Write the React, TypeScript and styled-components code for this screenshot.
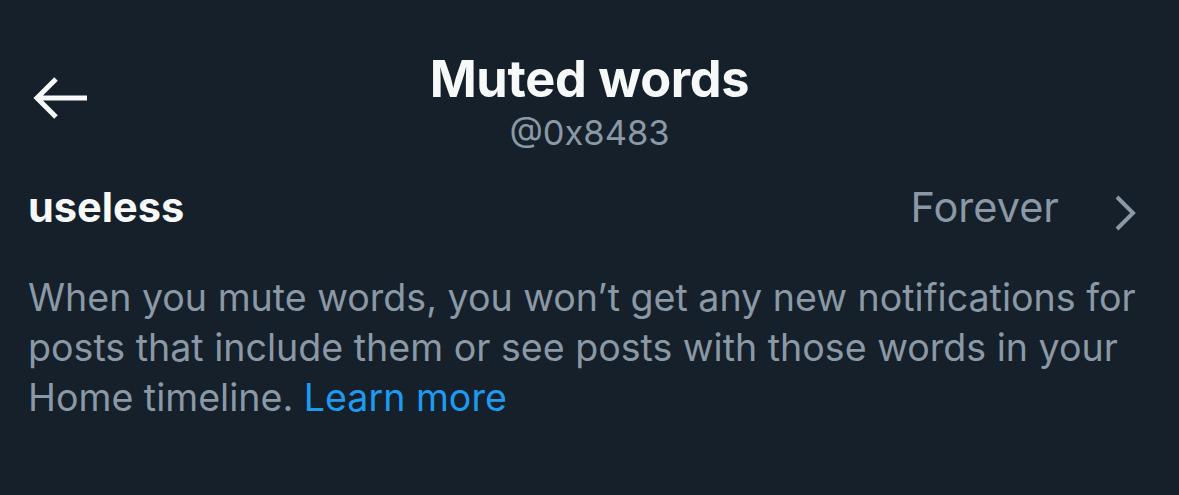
import styled, { createGlobalStyle } from 'styled-components'

const GlobalStyle = createGlobalStyle`
  html, body {
    margin: 0;
    padding: 0;
    background: #15202b;
  }
  body {
    font-family: Inter, "Noto Sans", sans-serif;
    -webkit-font-smoothing: antialiased;
  }
`

const Screen = styled.div`
  width: 1179px;
  height: 495px;
  background: #15202b;
  color: #f7f9f9;
  overflow: hidden;
`

const Header = styled.header`
  display: grid;
  grid-template-columns: 1fr auto 1fr;
  align-items: start;
  height: 165px;
  padding: 0 28px;
  box-sizing: border-box;
`

const BackButton = styled.button`
  display: flex;
  align-items: center;
  justify-content: center;
  justify-self: start;
  width: 62px;
  height: 62px;
  padding: 0;
  margin: 67px 0 0 2px;
  border: none;
  background: transparent;
  color: #f7f9f9;
  cursor: pointer;
`

const TitleBlock = styled.div`
  display: flex;
  flex-direction: column;
  align-items: center;
  padding-top: 49px;
`

const Title = styled.h1`
  margin: 0;
  font-size: 50.5px;
  font-weight: 700;
  line-height: 60px;
  letter-spacing: -0.3px;
`

const Handle = styled.div`
  margin-top: 3px;
  font-size: 34.5px;
  line-height: 42px;
  color: #8b98a5;
`

const WordRow = styled.div`
  display: flex;
  align-items: center;
  height: 84px;
  padding: 0 40px 0 28px;
`

const Word = styled.span`
  flex: 1;
  font-size: 41.5px;
  font-weight: 700;
  line-height: 50px;
`

const Duration = styled.span`
  font-size: 41.5px;
  line-height: 50px;
  color: #8b98a5;
  margin-right: 54px;
`

const Chevron = styled.svg`
  width: 26px;
  height: 40px;
  margin-top: 12px;
  color: #8b98a5;
`

const Description = styled.p`
  margin: 24px 0 0;
  padding: 0 14px 0 28px;
  font-size: 37.6px;
  line-height: 50px;
  color: #8b98a5;
`

const Link = styled.a`
  color: #1d9bf0;
  text-decoration: none;
`

export default function App() {
  return (
    <Screen>
      <GlobalStyle />
      <Header>
        <BackButton aria-label="Back">
          <svg width="56" height="46" viewBox="0 0 56 46" fill="none">
            <path
              d="M54 23H5M23 4L4 23l19 19"
              stroke="currentColor"
              strokeWidth="5"
            />
          </svg>
        </BackButton>
        <TitleBlock>
          <Title>Muted words</Title>
          <Handle>@0x8483</Handle>
        </TitleBlock>
        <div />
      </Header>
      <WordRow>
        <Word>useless</Word>
        <Duration>Forever</Duration>
        <Chevron viewBox="0 0 26 40" fill="none">
          <path d="M4 4l16 16L4 36" stroke="currentColor" strokeWidth="4" />
        </Chevron>
      </WordRow>
      <Description>
        When you mute words, you won’t get any new notifications for posts that
        include them or see posts with those words in your Home timeline.{' '}
        <Link href="#">Learn more</Link>
      </Description>
    </Screen>
  )
}
